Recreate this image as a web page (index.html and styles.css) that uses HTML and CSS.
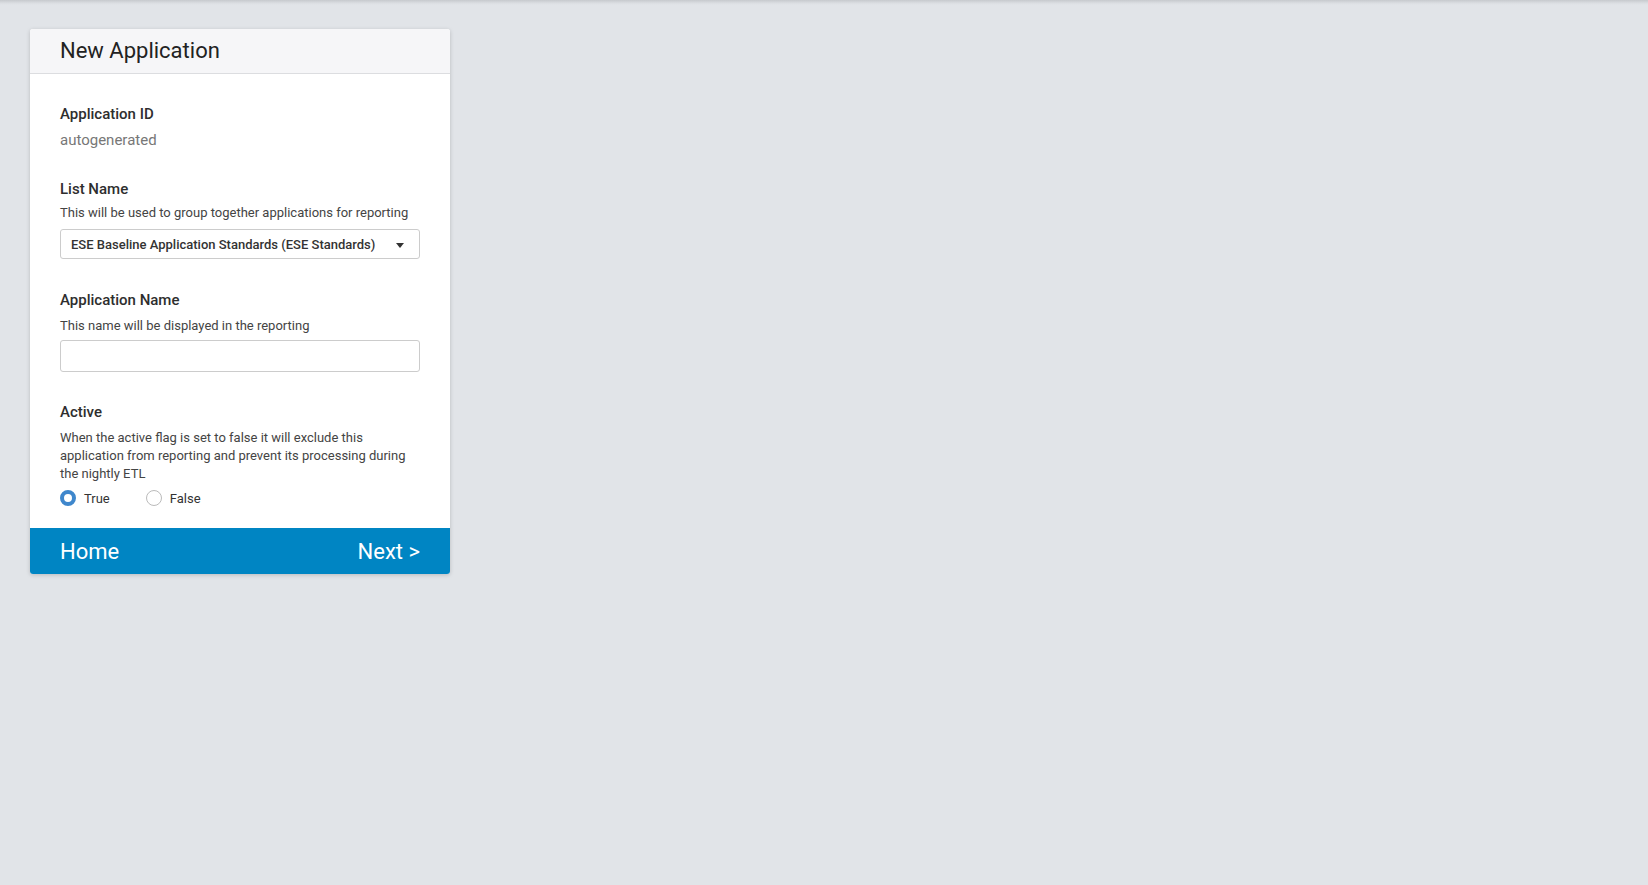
FILE: index.html
```html
<!DOCTYPE html>
<html lang="en">
<head>
<meta charset="utf-8">
<title>New Application</title>
<link rel="stylesheet" href="styles.css">
</head>
<body>
<div class="topshade"></div>
<main class="page">
  <section class="card">
    <header class="card-header">
      <h1 class="card-title">New Application</h1>
    </header>
    <div class="card-body">
      <div class="field field-id">
        <div class="label">Application ID</div>
        <div class="value">autogenerated</div>
      </div>
      <div class="field">
        <div class="label">List Name</div>
        <div class="desc desc-select">This will be used to group together applications for reporting</div>
        <div class="select">
          <span class="select-text">ESE Baseline Application Standards (ESE Standards)</span>
          <span class="caret"></span>
        </div>
      </div>
      <div class="field field-name">
        <div class="label">Application Name</div>
        <div class="desc desc-input">This name will be displayed in the reporting</div>
        <div class="input"></div>
      </div>
      <div class="field field-active">
        <div class="label">Active</div>
        <div class="desc desc-wrap">When the active flag is set to false it will exclude this application from reporting and prevent its processing during the nightly ETL</div>
        <div class="radios">
          <label class="radio-item"><span class="radio radio-on"></span><span class="radio-text">True</span></label>
          <label class="radio-item"><span class="radio"></span><span class="radio-text">False</span></label>
        </div>
      </div>
    </div>
    <footer class="card-footer">
      <span class="footer-link">Home</span>
      <span class="footer-link">Next &gt;</span>
    </footer>
  </section>
</main>
</body>
</html>
```

FILE: styles.css
```css
html, body {
  margin: 0;
  padding: 0;
}
body {
  background: #e1e4e8;
  font-family: Roboto, "Liberation Sans", Arial, sans-serif;
  color: #333;
  min-height: 885px;
}
.topshade {
  height: 5px;
  background: linear-gradient(#c6c9cd, #dadde1 60%, #e1e4e8);
}
.page {
  padding: 24px 0 0 30px;
}
.card {
  width: 420px;
  background: #fff;
  border-radius: 3px;
  box-shadow: 0 1px 4px rgba(0,0,0,0.18);
  overflow: hidden;
}
.card-header {
  height: 44px;
  background: #f6f6f8;
  border-bottom: 1px solid #dcdde0;
  padding: 0 30px;
}
.card-title {
  margin: 0;
  font-size: 22px;
  line-height: 44px;
  font-weight: 400;
  color: #222;
}
.card-body {
  padding: 30px 30px 18px 30px;
  display: flex;
  flex-direction: column;
  gap: 30px;
}
.field {
  display: flex;
  flex-direction: column;
}
.field-id {
  margin-bottom: -1px;
}
.field-name {
  margin-top: 1px;
}
.label {
  font-size: 15px;
  line-height: 20px;
  font-weight: 500;
  color: #2e2e2e;
  margin-bottom: 5px;
}
.field-name .label,
.field-active .label {
  margin-bottom: 7px;
}
.value {
  font-size: 15px;
  line-height: 20px;
  padding-top: 1px;
  color: #777;
}
.desc {
  font-size: 13px;
  line-height: 18px;
  color: #444;
}
.desc-select {
  margin-bottom: 7px;
  line-height: 18.2px;
}
.desc-input {
  margin-bottom: 5px;
}
.desc-wrap {
  margin-bottom: 3px;
}
.select {
  height: 28px;
  border: 1px solid #ccc;
  border-radius: 3px;
  display: flex;
  align-items: center;
  justify-content: space-between;
  padding: 0 15px 0 10px;
}
.select-text {
  font-size: 13px;
  font-weight: 500;
  color: #333;
}
.caret {
  width: 0;
  height: 0;
  border-left: 4px solid transparent;
  border-right: 4px solid transparent;
  border-top: 5px solid #333;
  margin-top: 2px;
}
.input {
  height: 30px;
  border: 1px solid #ccc;
  border-radius: 3px;
}
.radios {
  display: flex;
  align-items: center;
  gap: 36px;
  height: 24px;
}
.radio-item {
  display: flex;
  align-items: center;
  gap: 8px;
  font-size: 13px;
  color: #333;
}
.radio {
  box-sizing: border-box;
  width: 16px;
  height: 16px;
  border-radius: 50%;
  border: 1px solid #bbb;
  background: #fff;
}
.radio-on {
  border: 4px solid #3f87cc;
}
.card-footer {
  height: 46px;
  background: #0085c3;
  display: flex;
  align-items: center;
  justify-content: space-between;
  padding: 0 30px;
}
.footer-link {
  color: #fff;
  font-size: 22px;
  font-weight: 400;
}
```
